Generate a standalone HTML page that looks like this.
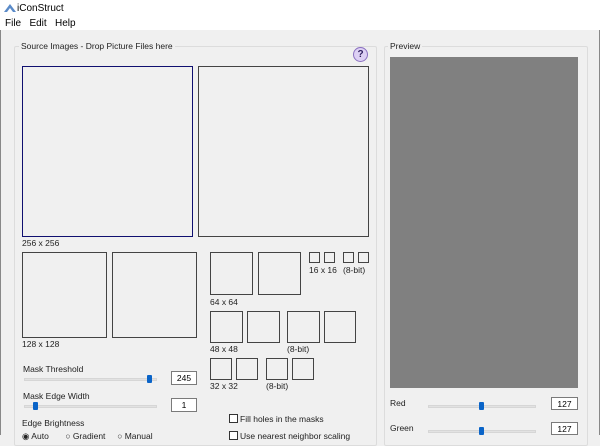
<!DOCTYPE html>
<html><head><style>
*{margin:0;padding:0;box-sizing:border-box}
body{width:600px;height:435px;overflow:hidden;background:#f0f0f0;font-family:"Liberation Sans",sans-serif;font-size:9px;color:#000;position:relative}
div,span{position:absolute}
.b{border:1px solid #444;background:#f0f0f0}
.t{white-space:nowrap;font-size:8.5px;color:#222}
.trk{height:3px;background:#e2e2e2;border:1px solid #d6d6d6}
.th{width:5px;height:8px;background:#0a64c8;border-radius:1px}
.in{background:#fff;border:1px solid #7a7a7a;text-align:center;font-size:8.5px;line-height:12px}
.cb{width:9px;height:9px;border:1px solid #333;background:#fff}
</style></head><body>
<div style="left:0;top:0;width:600px;height:16px;background:#fff"></div>
<svg style="position:absolute;left:4px;top:3px" width="12" height="10"><polygon points="0,9 6,1 12,9" fill="#5a8ac8"/><polygon points="3,9 6,5 9,9" fill="#fff"/></svg>
<span class="t" style="left:17px;top:3px;font-size:10px;color:#000">iConStruct</span>
<div style="left:0;top:16px;width:600px;height:14px;background:#fff"></div>
<span class="t" style="left:5px;top:18px;font-size:10px;color:#000">File&nbsp;&nbsp;&nbsp;Edit&nbsp;&nbsp;&nbsp;Help</span>
<div style="left:0;top:30px;width:1px;height:405px;background:#888"></div>
<div style="left:599px;top:30px;width:1px;height:405px;background:#888"></div>
<div style="left:14px;top:46px;width:363px;height:400px;border:1px solid #dcdcdc;border-radius:2px"></div>
<span class="t" style="left:19px;top:41px;background:#f0f0f0;padding:0 2px">Source Images - Drop Picture Files here</span>
<div style="left:384px;top:46px;width:204px;height:400px;border:1px solid #dcdcdc;border-radius:2px"></div>
<span class="t" style="left:388px;top:41px;background:#f0f0f0;padding:0 2px">Preview</span>
<div style="left:353px;top:47px;width:15px;height:15px;border-radius:50%;background:#ddd0f4;border:1px solid #8a70c0;font-weight:bold;font-size:10px;text-align:center;line-height:13px;color:#302060">?</div>
<div class="b" style="left:22px;top:66px;width:171px;height:171px;border-color:#101070"></div>
<div class="b" style="left:198px;top:66px;width:171px;height:171px"></div>
<span class="t" style="left:22px;top:238px">256 x 256</span>
<div class="b" style="left:22px;top:252px;width:85px;height:86px"></div>
<div class="b" style="left:112px;top:252px;width:85px;height:86px"></div>
<span class="t" style="left:22px;top:339px">128 x 128</span>
<div class="b" style="left:210px;top:252px;width:43px;height:43px"></div>
<div class="b" style="left:258px;top:252px;width:43px;height:43px"></div>
<span class="t" style="left:210px;top:297px">64 x 64</span>
<div class="b" style="left:309px;top:252px;width:11px;height:11px"></div>
<div class="b" style="left:324px;top:252px;width:11px;height:11px"></div>
<div class="b" style="left:343px;top:252px;width:11px;height:11px"></div>
<div class="b" style="left:358px;top:252px;width:11px;height:11px"></div>
<span class="t" style="left:309px;top:265px">16 x 16</span>
<span class="t" style="left:343px;top:265px">(8-bit)</span>
<div class="b" style="left:210px;top:311px;width:33px;height:32px"></div>
<div class="b" style="left:247px;top:311px;width:33px;height:32px"></div>
<div class="b" style="left:287px;top:311px;width:33px;height:32px"></div>
<div class="b" style="left:324px;top:311px;width:32px;height:32px"></div>
<span class="t" style="left:210px;top:344px">48 x 48</span>
<span class="t" style="left:287px;top:344px">(8-bit)</span>
<div class="b" style="left:210px;top:358px;width:22px;height:22px"></div>
<div class="b" style="left:236px;top:358px;width:22px;height:22px"></div>
<div class="b" style="left:266px;top:358px;width:22px;height:22px"></div>
<div class="b" style="left:292px;top:358px;width:22px;height:22px"></div>
<span class="t" style="left:210px;top:381px">32 x 32</span>
<span class="t" style="left:266px;top:381px">(8-bit)</span>
<span class="t" style="left:23px;top:364px">Mask Threshold</span>
<div class="trk" style="left:24px;top:378px;width:133px"></div>
<div class="th" style="left:147px;top:375px"></div>
<div class="in" style="left:171px;top:371px;width:26px;height:14px">245</div>
<span class="t" style="left:23px;top:391px">Mask Edge Width</span>
<div class="trk" style="left:24px;top:405px;width:133px"></div>
<div class="th" style="left:33px;top:402px"></div>
<div class="in" style="left:171px;top:398px;width:26px;height:14px">1</div>
<span class="t" style="left:22px;top:418px">Edge Brightness</span>
<span class="t" style="left:22px;top:431px">◉ Auto&nbsp;&nbsp;&nbsp;&nbsp;&nbsp;&nbsp;&nbsp;○ Gradient&nbsp;&nbsp;&nbsp;&nbsp;&nbsp;○ Manual</span>
<div class="cb" style="left:229px;top:414px"></div>
<span class="t" style="left:240px;top:414px">Fill holes in the masks</span>
<div class="cb" style="left:229px;top:431px"></div>
<span class="t" style="left:240px;top:431px">Use nearest neighbor scaling</span>
<div style="left:390px;top:57px;width:188px;height:331px;background:#808080"></div>
<span class="t" style="left:390px;top:398px">Red</span>
<div class="trk" style="left:428px;top:405px;width:108px"></div>
<div class="th" style="left:479px;top:402px"></div>
<div class="in" style="left:551px;top:397px;width:27px;height:13px">127</div>
<span class="t" style="left:390px;top:423px">Green</span>
<div class="trk" style="left:428px;top:430px;width:108px"></div>
<div class="th" style="left:479px;top:427px"></div>
<div class="in" style="left:551px;top:422px;width:27px;height:13px">127</div>
</body></html>
